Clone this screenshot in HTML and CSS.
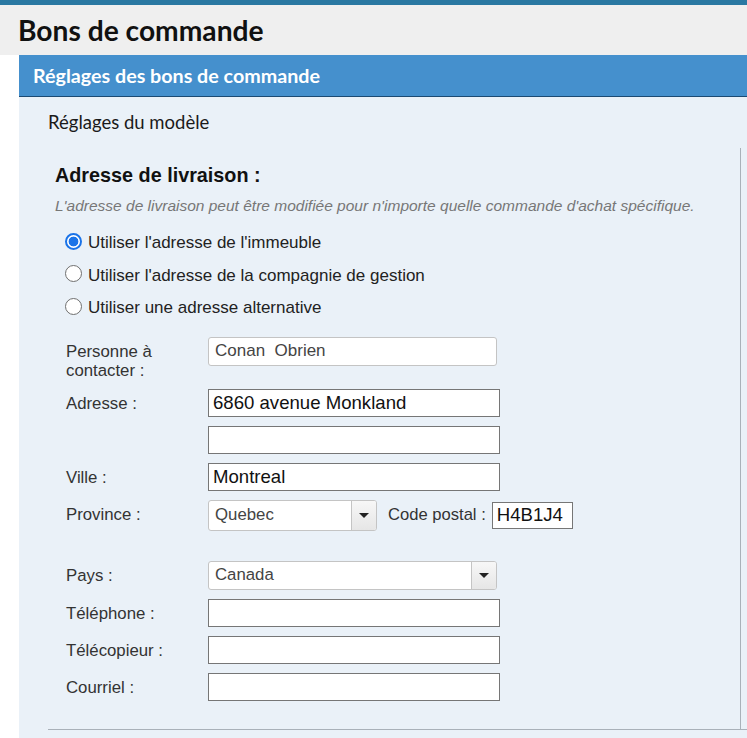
FILE: index.html
```html
<!DOCTYPE html>
<html lang="fr">
<head>
<meta charset="utf-8">
<title>Bons de commande</title>
<link rel="stylesheet" href="styles.css">
</head>
<body>
<div class="topline"></div>
<header class="page-header"><h1>Bons de commande</h1></header>
<main class="main">
  <div class="bar">Réglages des bons de commande</div>
  <div class="panel">
    <div class="subtitle">Réglages du modèle</div>
    <div class="section">
      <div class="box">
        <h2>Adresse de livraison :</h2>
        <p class="hint">L'adresse de livraison peut être modifiée pour n'importe quelle commande d'achat spécifique.</p>
        <div class="radios">
          <label class="radio-row"><input type="radio" name="addr" checked><span>Utiliser l'adresse de l'immeuble</span></label>
          <label class="radio-row"><input type="radio" name="addr"><span>Utiliser l'adresse de la compagnie de gestion</span></label>
          <label class="radio-row"><input type="radio" name="addr"><span>Utiliser une adresse alternative</span></label>
        </div>
        <div class="form">
          <div class="lbl">Personne à<br>contacter :</div>
          <div class="fld"><input class="txt rounded" type="text" value="Conan  Obrien"></div>

          <div class="lbl">Adresse :</div>
          <div class="fld"><input class="txt big" type="text" value="6860 avenue Monkland"></div>

          <div class="lbl"></div>
          <div class="fld"><input class="txt big" type="text" value=""></div>

          <div class="lbl">Ville :</div>
          <div class="fld"><input class="txt big" type="text" value="Montreal"></div>

          <div class="lbl">Province :</div>
          <div class="fld inline">
            <div class="select sel-prov"><span class="sel-text">Quebec</span><span class="sel-btn"><span class="tri"></span></span></div>
            <span class="postal-lbl">Code postal :</span>
            <input class="txt big postal" type="text" value="H4B1J4">
          </div>

          <div class="lbl pays-lbl">Pays :</div>
          <div class="fld pays-fld">
            <div class="select sel-pays"><span class="sel-text">Canada</span><span class="sel-btn"><span class="tri"></span></span></div>
          </div>

          <div class="lbl">Téléphone :</div>
          <div class="fld"><input class="txt big" type="text" value=""></div>

          <div class="lbl">Télécopieur :</div>
          <div class="fld"><input class="txt big" type="text" value=""></div>

          <div class="lbl">Courriel :</div>
          <div class="fld"><input class="txt big" type="text" value=""></div>
        </div>
      </div>
    </div>
  </div>
</main>
</body>
</html>
```
FILE: styles.css
```css
html, body {
  margin: 0;
  padding: 0;
  background: #ffffff;
  font-family: "Liberation Sans", Arial, sans-serif;
  color: #333333;
  overflow: hidden;
}

.topline {
  height: 5px;
  background: #2a78a2;
}

.page-header {
  height: 50px;
  background: #efefef;
  display: flex;
  align-items: center;
  padding-left: 18px;
}

.page-header h1 {
  margin: 0;
  font-family: Lato, "Liberation Sans", sans-serif;
  font-weight: 700;
  font-size: 28.2px;
  color: #111111;
  line-height: 1;
}

.main {
  margin-left: 19px;
}

.bar {
  height: 41px;
  background: #4590cd;
  border-bottom: 1px solid #1b4a73;
  color: #ffffff;
  font-family: Lato, "Liberation Sans", sans-serif;
  font-weight: 700;
  font-size: 19.7px;
  display: flex;
  align-items: center;
  padding-left: 14px;
}

.panel {
  background: #eaf1f8;
  padding-bottom: 20px;
}

.subtitle {
  font-family: Lato, "Liberation Sans", sans-serif;
  font-size: 18.5px;
  color: #1a1a1a;
  padding: 15px 0 0 29px;
  line-height: 20px;
  height: 36px;
}

.section {
  margin-left: 29px;
  border-bottom: 1px solid #a9b1b9;
}

.box {
  margin-right: 6px;
  border-right: 1px solid #a9b1b9;
  padding: 15px 0 28px 7px;
}

.box h2 {
  margin: 0;
  font-size: 19.8px;
  font-weight: 700;
  line-height: 24px;
  color: #111111;
}

.hint {
  margin: 10px 0 0 0;
  font-size: 15.5px;
  font-style: italic;
  color: #777777;
  line-height: 18px;
}

.radios {
  margin-top: 12px;
  display: flex;
  flex-direction: column;
}

.radio-row {
  display: flex;
  align-items: center;
  height: 32.5px;
  font-size: 17px;
  color: #222222;
  padding-left: 10px;
}

.radio-row input {
  appearance: none;
  -webkit-appearance: none;
  width: 17px;
  height: 17px;
  margin: 0 6px 4px 0;
  border: 1px solid #6f6f6f;
  border-radius: 50%;
  background: #ffffff;
  box-sizing: border-box;
}

.radio-row input:checked {
  border: 2px solid #1a73e8;
  background: radial-gradient(circle, #1a73e8 0 4.6px, #ffffff 5.2px);
}

.form {
  margin-top: 12px;
  padding-left: 11px;
  display: grid;
  grid-template-columns: 142px auto;
  row-gap: 9px;
}

.lbl {
  font-size: 16.8px;
  line-height: 19px;
  padding-top: 5px;
  color: #333333;
  min-height: 38px;
}

.form .lbl:not(:first-child) {
  min-height: 0;
}

.fld {
  display: flex;
  align-items: flex-start;
}

.inline {
  align-items: center;
}

.txt {
  box-sizing: border-box;
  height: 28px;
  width: 292px;
  margin: 0;
  border: 1px solid #767676;
  background: #ffffff;
  font-family: "Liberation Sans", Arial, sans-serif;
  color: #111111;
  padding: 0 4px;
  outline: none;
}

.big {
  font-size: 18.6px;
}

.rounded {
  width: 289px;
  height: 29px;
  border: 1px solid #c4c4c4;
  border-radius: 3px;
  font-size: 17px;
  color: #444444;
  padding: 0 6px;
}

.select {
  box-sizing: border-box;
  display: flex;
  align-items: stretch;
  background: #ffffff;
  border: 1px solid #c4c4c4;
  border-radius: 3px;
  font-size: 16.8px;
  color: #444444;
  overflow: hidden;
}

.sel-text {
  flex: 1;
  display: flex;
  align-items: center;
  padding-left: 6px;
}

.sel-btn {
  width: 24px;
  border-left: 1px solid #c4c4c4;
  background: linear-gradient(#f7f7f7, #e6e6e6);
  display: flex;
  align-items: center;
  justify-content: center;
}

.tri {
  width: 0;
  height: 0;
  border-left: 5px solid transparent;
  border-right: 5px solid transparent;
  border-top: 5px solid #222222;
}

.sel-prov {
  width: 169px;
  height: 31px;
}

.sel-pays {
  width: 289px;
  height: 29px;
}

.postal-lbl {
  font-size: 16.6px;
  color: #333333;
  margin-left: 11px;
  margin-right: 6px;
}

.postal {
  width: 81px;
  height: 27px;
  padding: 0 4px;
}

.pays-lbl,
.pays-fld {
  margin-top: 21px;
}
```
